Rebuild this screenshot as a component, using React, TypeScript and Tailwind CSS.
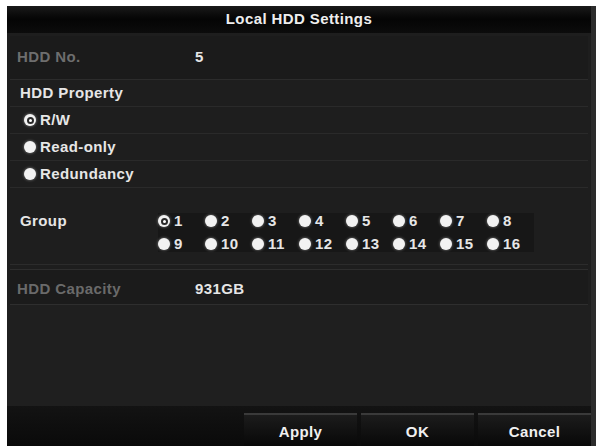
import React from 'react';

const font = { fontFamily: '"Liberation Sans", Arial, sans-serif' };

function Radio({ checked }: { checked?: boolean }) {
  return (
    <span className="flex h-[12px] w-[12px] shrink-0 items-center justify-center rounded-full bg-[#f2f2f2] shadow-[0_0_3px_rgba(255,255,255,0.5)]">
      {checked && <span className="h-[7px] w-[7px] rounded-full border-[2px] border-[#2a2a2a] bg-white" />}
    </span>
  );
}

export default function App() {
  const groups = Array.from({ length: 16 }, (_, i) => i + 1);

  return (
    <div className="h-[448px] w-[598px] bg-white pl-[7px] pr-[2px] pt-[6px] pb-[2px]" style={font}>
      <div className="flex h-full flex-col border-r-[5px] border-[#2c2c2c] bg-[#1e1e1e] text-[15px] tracking-[0.4px] text-[#e6e6e6]">
        {/* title */}
        <div className="flex h-[27px] items-center justify-center bg-gradient-to-b from-[#1a1a1a] via-[#050505] to-[#0c0c0c] font-bold text-[#eeeeee]">
          Local HDD Settings
        </div>

        <div className="mx-[3px] mt-[3px] flex h-[44px] items-center border-b border-[#2c2c2c] bg-[#1b1b1b]">
          <span className="w-[185px] pl-[7px] font-bold text-[#6e6e6e]">HDD No.</span>
          <span className="font-bold">5</span>
        </div>

        <div className="mx-[3px] flex h-[27px] items-center border-b border-[#2a2a2a] pl-[10px] font-bold">HDD Property</div>
        {['R/W', 'Read-only', 'Redundancy'].map((t, i) => (
          <div key={t} className="mx-[3px] flex h-[27px] items-center gap-[4px] border-b border-[#2a2a2a] pl-[14px] font-bold">
            <Radio checked={i === 0} />
            {t}
          </div>
        ))}

        <div className="mx-[3px] flex h-[77px] border-b border-[#2c2c2c] pt-[25px]">
          <span className="w-[148px] pl-[10px] font-bold leading-[16px]">Group</span>
          <div className="grid h-fit grid-cols-[repeat(8,47px)] gap-y-[7px] bg-[#171717]">
            {groups.map(g => (
              <div key={g} className="flex h-[16px] items-center gap-[4px] font-bold">
                <Radio checked={g === 1} />
                {g}
              </div>
            ))}
          </div>
        </div>

        <div className="mx-[3px] mt-[4px] flex h-[36px] items-center border-y border-[#2e2e2e] bg-[#1b1b1b] pt-[5px]">
          <span className="w-[185px] pl-[7px] font-bold text-[#6a6a6a]">HDD Capacity</span>
          <span className="font-bold">931GB</span>
        </div>

        <div className="flex-1 bg-[#1f1f1f]" />

        {/* buttons */}
        <div className="flex h-[40px] items-end justify-end gap-[4px] bg-gradient-to-b from-[#131313] to-[#0a0a0a]">
          {['Apply', 'OK', 'Cancel'].map(b => (
            <button
              key={b}
              className="flex h-[33px] w-[113px] items-center justify-center border-t-2 border-[#3a3a3a] bg-gradient-to-b from-[#1c1c1c] to-[#080808] pt-[3px] font-bold text-[#f0f0f0]"
            >
              {b}
            </button>
          ))}
        </div>
      </div>
    </div>
  );
}
